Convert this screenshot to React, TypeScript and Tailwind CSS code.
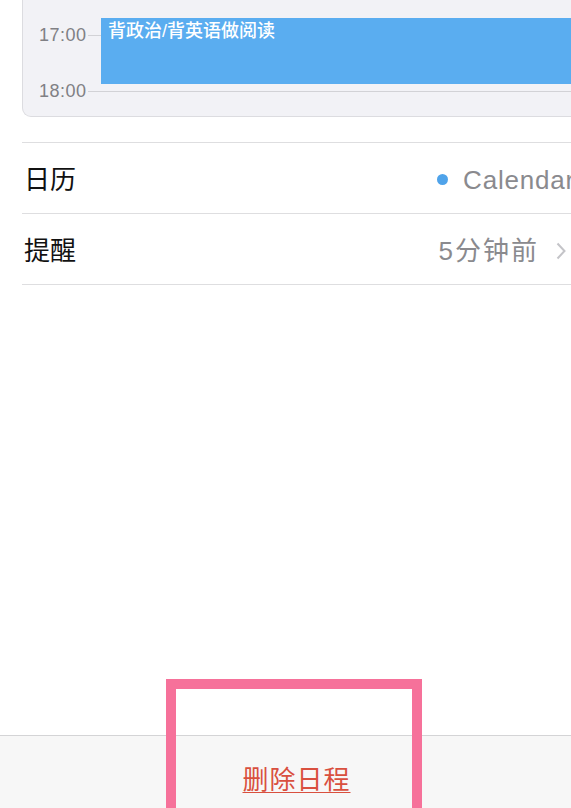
const font = { fontFamily: '"Liberation Sans", "Noto Sans CJK SC", sans-serif' };

function HourRow({ label }: { label: string }) {
  return (
    <div className="flex items-center h-[20px]">
      <span className="w-[65px] pl-[16px] text-[18px] leading-none tracking-[0.5px] text-[#808084]">
        {label}
      </span>
      <div className="flex-1 h-px bg-[#d2d2d6]" />
    </div>
  );
}

function DayCard() {
  return (
    <div className="relative w-[560px] h-[117px] bg-[#f2f2f6] border border-t-0 border-[#dcdce0] rounded-b-[9px]">
      <div className="flex flex-col gap-[36px] pt-[25px]">
        <HourRow label="17:00" />
        <HourRow label="18:00" />
      </div>
      {/* event block sits on the time grid */}
      <div className="absolute left-[78px] right-0 top-[18px] h-[66px] bg-[#5aadf0] px-[7px] pt-[2px]">
        <span className="text-[18px] leading-none font-medium text-white">背政治/背英语做阅读</span>
      </div>
    </div>
  );
}

function Chevron() {
  return (
    <svg width="10" height="18" viewBox="0 0 10 18" className="ml-[17px] mr-[9px]">
      <polyline points="1.5,1.5 8.5,9 1.5,16.5" fill="none" stroke="#c4c4c8" strokeWidth="2" />
    </svg>
  );
}

function SettingRow({ title, children }: { title: string; children: React.ReactNode }) {
  return (
    <div className="flex items-center h-[71px] pt-[3px] border-b border-[#dedee0]">
      <span className="pl-[2px] text-[26px] leading-none text-[#111]">{title}</span>
      <div className="ml-auto flex items-center">{children}</div>
    </div>
  );
}

export default function App() {
  return (
    <div className="relative h-screen w-[571px] overflow-hidden bg-white flex flex-col" style={font}>
      <div className="pl-[22px]">
        <DayCard />
        <div className="w-[553px] mt-[25px] border-t border-[#dedee0]">
          <SettingRow title="日历">
            <span className="w-[11px] h-[11px] rounded-full bg-[#4fa3ea] mr-[15px]" />
            <span className="text-[26px] leading-none tracking-[0.8px] text-[#8a8a8e]">Calendar</span>
          </SettingRow>
          <SettingRow title="提醒">
            <span className="text-[26px] leading-none tracking-[2px] text-[#8a8a8e]">5分钟前</span>
            <Chevron />
          </SettingRow>
        </div>
      </div>

      <div className="flex-1" />

      <div className="h-[73px] border-t border-[#d4d4d6] bg-[#f7f7f7] flex justify-center pl-[22px] pt-[31px]">
        <span className="text-[26px] leading-none tracking-[1px] text-[#d9503f] underline underline-offset-[3px] decoration-1">
          删除日程
        </span>
      </div>

      {/* highlight frame around the delete action */}
      <div className="absolute left-[166px] top-[679px] w-[256px] h-[150px] border-[10px] border-[#f6719a]" />
    </div>
  );
}
